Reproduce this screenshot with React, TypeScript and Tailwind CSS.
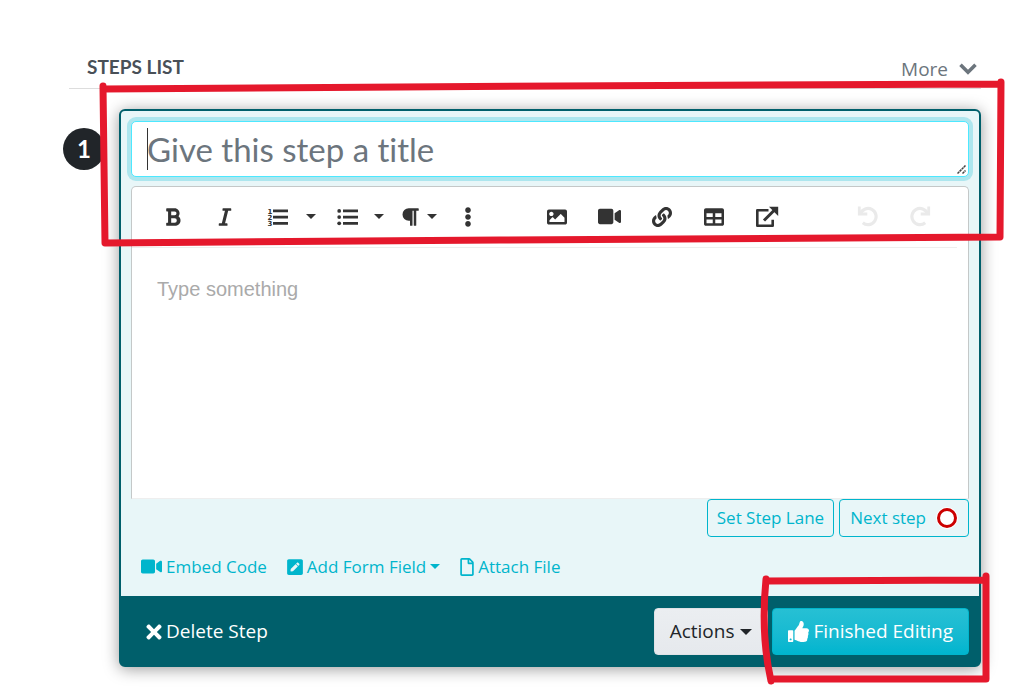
import { useState } from 'react';
import type { ReactNode } from 'react';
import {
  FaBold,
  FaEllipsisV,
  FaImage,
  FaItalic,
  FaLink,
  FaParagraph,
  FaPenSquare,
  FaRegFile,
  FaTable,
  FaThumbsUp,
  FaTimes,
  FaVideo,
} from 'react-icons/fa';

function ToolButton({ label, className = 'w-[52px]', disabled, children }: {
  label: string;
  className?: string;
  disabled?: boolean;
  children: ReactNode;
}) {
  return (
    <button
      type="button"
      aria-label={label}
      disabled={disabled}
      className={`flex h-10 shrink-0 items-center justify-center text-[#333333] disabled:text-[#eaeaea] ${className}`}
    >
      {children}
    </button>
  );
}

function Caret({ width = 10 }: { width?: number }) {
  return (
    <svg width={width} height={Math.ceil(width / 2)} viewBox="0 0 10 5" fill="currentColor" aria-hidden="true">
      <path d="M0 0h10L5 5z" />
    </svg>
  );
}

function ChevronIcon() {
  return (
    <svg width="18" height="12" viewBox="0 0 18 12" fill="none" stroke="currentColor" strokeWidth="3.6" aria-hidden="true">
      <path d="M1.500 1.800L9 9.200L16.500 1.800" />
    </svg>
  );
}

function OrderedListIcon() {
  return (
    <svg width="21" height="20" viewBox="0 0 21 20" fill="currentColor" aria-hidden="true">
      <path d="M6 2.500h15v2.800H6zM6 8.700h15v2.800H6zM6 14.900h15v2.800H6z" />
      <g fontFamily="DejaVu Sans, sans-serif" fontSize="7" fontWeight="700">
        <text x="0.500" y="6.500">1</text>
        <text x="0.500" y="12.700">2</text>
        <text x="0.500" y="18.900">3</text>
      </g>
    </svg>
  );
}

function UnorderedListIcon() {
  return (
    <svg width="21" height="20" viewBox="0 0 21 20" fill="currentColor" aria-hidden="true">
      <path d="M6 2.500h15v2.800H6zM6 8.700h15v2.800H6zM6 14.900h15v2.800H6z" />
      <circle cx="2.200" cy="3.900" r="1.900" />
      <circle cx="2.200" cy="10.100" r="1.900" />
      <circle cx="2.200" cy="16.300" r="1.900" />
    </svg>
  );
}

function ExternalIcon() {
  return (
    <svg width="24" height="22" viewBox="0 0 24 22" fill="none" stroke="currentColor" strokeWidth="2.6" aria-hidden="true">
      <path d="M13.500 4.300H2.300v15.400h15.400v-6" strokeLinejoin="round" />
      <path d="M9 14.500L19.500 4" strokeWidth="3" />
      <path d="M14 0.800h9.200v9.200z" fill="currentColor" stroke="none" />
    </svg>
  );
}

function UndoIcon({ flip }: { flip?: boolean }) {
  return (
    <svg width="22" height="21" viewBox="0 0 22 21" fill="none" stroke="currentColor" strokeWidth="3.2" className={flip ? '-scale-x-100' : ''} aria-hidden="true">
      <path d="M3.500 7.500A8.100 8.100 0 1 1 5.800 16.800" />
      <path d="M2.300 0.500v7.500h8" strokeWidth="2.800" />
    </svg>
  );
}

/* Hand-drawn red marker boxes */
function Marker() {
  return (
    <svg className="pointer-events-none absolute left-0 top-0 z-10" width="1031" height="698" viewBox="0 0 1031 698" fill="none" stroke="#e5182c" strokeWidth="7" strokeLinecap="round" strokeLinejoin="round" aria-hidden="true">
      <path d="M103 86L105 243M103 89L560 86L1001 84M1001 82L1000 237M105 243L500 240L1000 237" />
      <path d="M766 579C762 620 764 650 771 681M766 581L986 580M986 576L986 679M771 679L986 679" />
    </svg>
  );
}

export default function App() {
  const [title, setTitle] = useState('');
  const [body, setBody] = useState('');

  return (
    <div className="relative min-h-screen overflow-hidden bg-white pb-8 pl-[63px] pr-[50px] pt-[46px] font-['Open_Sans',sans-serif]">
      <header className="ml-1.5 flex h-[43px] items-start justify-between border-b border-[#dddddd] pl-[18px] pr-1">
        <h2 className="font-['Lato',sans-serif] text-[19px] font-bold leading-[42px] text-[#495057]">STEPS LIST</h2>
        <button type="button" className="flex items-center gap-[11px] text-[19px] leading-[46px] text-[#6c757d]">
          More
          <ChevronIcon />
        </button>
      </header>

      <main className="mt-5 flex items-start gap-3.5">
        <div className="mt-[19px] flex h-[42px] w-[42px] shrink-0 items-center justify-center rounded-full bg-[#212529] font-['Lato',sans-serif] text-2xl font-bold text-white">
          1
        </div>

        <section className="min-w-0 flex-1 rounded-md border-2 border-[#005f6b] bg-[#e8f6f8] shadow-[0_2px_16px_rgba(0,0,0,0.4)]">
          <div className="px-2.5 pt-2.5">
            <div className="relative">
              <textarea
                rows={1}
                aria-label="Step title"
                placeholder="Give this step a title"
                value={title}
                onChange={(e) => setTitle(e.target.value)}
                className="block h-14 w-full resize-none rounded-[5px] border border-[#4de8ff] bg-white px-[15px] py-1.5 font-['Lato',sans-serif] text-[33px] leading-[42px] text-[#495057] outline-none ring-4 ring-[#ade6ee] [font-variant-ligatures:none] placeholder:text-[#6c757d]"
              />
              <span className="absolute left-4 top-[7px] h-[42px] w-px bg-[#333333]" />
              <svg className="absolute bottom-[3px] right-[3px]" width="9" height="9" viewBox="0 0 9 9" stroke="#444444" strokeWidth="1.5" strokeDasharray="2.500 0.500" aria-hidden="true">
                <path d="M0.500 8.500L8.500 0.500M5.500 8.500L8.500 5.500" />
              </svg>
            </div>

            <div className="mt-[9px] rounded-t-[5px] border border-b-[#eeeeee] border-[#c4c8c8] bg-white">
              <div className="mr-[11px] flex h-[61px] items-center border-b border-[#eeeeee] pb-px pl-[15px]">
                <ToolButton label="Bold"><FaBold size={20} /></ToolButton>
                <ToolButton label="Italic"><FaItalic size={20} /></ToolButton>
                <ToolButton label="Ordered list"><OrderedListIcon /></ToolButton>
                <ToolButton label="Ordered list options" className="ml-0.5 w-3"><Caret /></ToolButton>
                <ToolButton label="Unordered list" className="ml-1 w-[52px]"><UnorderedListIcon /></ToolButton>
                <ToolButton label="Unordered list options" className="w-3"><Caret /></ToolButton>
                <ToolButton label="Paragraph format" className="ml-2 w-[50px] gap-[7px]">
                  <FaParagraph size={20} />
                  <Caret />
                </ToolButton>
                <ToolButton label="More text" className="w-[50px]"><FaEllipsisV size={20} /></ToolButton>
                <ToolButton label="Insert image" className="ml-[37px] w-[53px]"><FaImage size={20} /></ToolButton>
                <ToolButton label="Insert video"><FaVideo size={23} /></ToolButton>
                <ToolButton label="Insert link" className="w-[53px]"><FaLink size={20} /></ToolButton>
                <ToolButton label="Insert table"><FaTable size={20} /></ToolButton>
                <ToolButton label="Open externally" className="w-[53px]"><ExternalIcon /></ToolButton>
                <ToolButton label="Undo" className="ml-auto w-[52px]" disabled><UndoIcon /></ToolButton>
                <ToolButton label="Redo" className="mr-[11px] w-[52px]" disabled><UndoIcon flip /></ToolButton>
              </div>
              <textarea
                aria-label="Step content"
                placeholder="Type something"
                value={body}
                onChange={(e) => setBody(e.target.value)}
                className="block h-[250px] w-full resize-none px-[25px] pt-[29px] font-['Liberation_Sans',Arial,sans-serif] text-xl leading-6 text-[#333333] outline-none placeholder:text-[#aaaaaa]"
              />
            </div>

            <div className="flex justify-end gap-[5px] text-[17px] text-[#00b5cc]">
              <button type="button" className="h-[38px] rounded border border-[#00b5cc] px-[9px]">Set Step Lane</button>
              <button type="button" className="flex h-[38px] items-center gap-2.5 rounded border border-[#00b5cc] px-2.5">
                Next step
                <span className="h-[22px] w-[22px] rounded-full border border-white bg-white">
                  <span className="block h-5 w-5 rounded-full border-[3px] border-[#cc0000]" />
                </span>
              </button>
            </div>

            <div className="flex h-[59px] items-center gap-5 pl-2.5 text-[17px] text-[#00b5cc]">
              <button type="button" className="flex items-center gap-1"><FaVideo size={21} />Embed Code</button>
              <button type="button" className="flex items-center gap-1"><FaPenSquare size={18} className="w-4" />Add Form Field<Caret /></button>
              <button type="button" className="flex items-center gap-1"><FaRegFile size={18} className="w-3.5" />Attach File</button>
            </div>
          </div>

          <footer className="flex h-[69px] items-center justify-between bg-[#005f6b] px-2.5 pt-0.5 text-[19px]">
            <button type="button" className="flex items-center gap-px pl-3 text-white">
              <FaTimes size={22} />
              Delete Step
            </button>
            <div className="flex gap-1">
              <button type="button" className="flex h-[47px] items-center gap-1.5 rounded border border-[#dfe2e6] bg-gradient-to-b from-[#ebeef1] to-[#e6e9ed] px-[15px] text-[#212529]">
                Actions
                <Caret width={12} />
              </button>
              <button type="button" className="flex h-[47px] items-center gap-1 rounded border border-[#00b5cc] bg-gradient-to-b from-[#26c0d4] to-[#00b5cf] px-[15px] text-white">
                <FaThumbsUp size={21} />
                Finished Editing
              </button>
            </div>
          </footer>
        </section>
      </main>

      <Marker />
    </div>
  );
}
